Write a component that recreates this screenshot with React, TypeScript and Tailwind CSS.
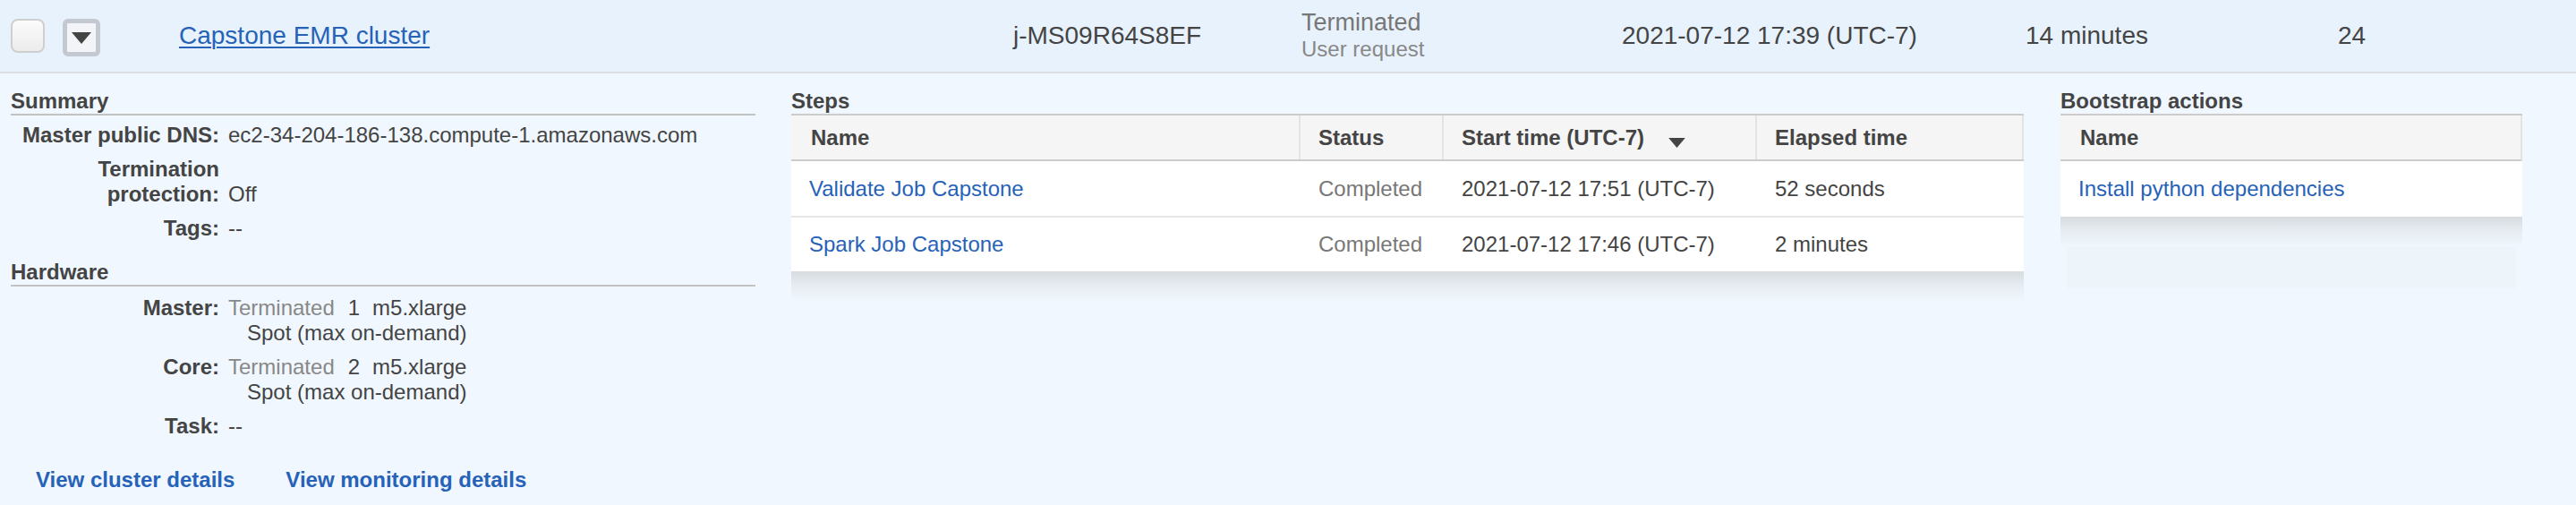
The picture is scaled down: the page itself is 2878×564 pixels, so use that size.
import React from 'react';

const blue = 'text-[#2662b8]';

function Caret({ className }: { className?: string }) {
  return (
    <svg viewBox="0 0 22 13" className={className}>
      <path d="M0 0H22L11 13Z" fill="#444" />
    </svg>
  );
}

function Label({ children }: { children: React.ReactNode }) {
  return <div className="text-right font-bold">{children}</div>;
}

function Instance({ count }: { count: string }) {
  return (
    <div className="flex w-fit flex-col items-end">
      <div className="flex">
        <span className="text-[#888]">Terminated</span>
        <span className="ml-[15px]">{count}</span>
        <span className="ml-[14px]">m5.xlarge</span>
      </div>
      <div>Spot (max on-demand)</div>
    </div>
  );
}

function TableFade() {
  return <div className="h-[34px] bg-linear-to-b from-[#d7dce1] via-[#e7edf2] to-[#f0f7fe]" />;
}

export default function App() {
  const steps = [
    { name: 'Validate Job Capstone', start: '2021-07-12 17:51 (UTC-7)', elapsed: '52 seconds' },
    { name: 'Spark Job Capstone', start: '2021-07-12 17:46 (UTC-7)', elapsed: '2 minutes' },
  ];

  return (
    <div className="h-[564px] overflow-hidden bg-[#f0f7fe] font-['Liberation_Sans',Arial,Helvetica,sans-serif] text-[#444]">
      {/* cluster row */}
      <div className="flex h-[82px] items-center border-b-2 border-[#dcdfe3] bg-[#e8f2fc] text-[28px]">
        <div className="flex w-[200px] shrink-0 items-center pl-[12px]">
          <div className="h-[38px] w-[38px] rounded-[8px] border-2 border-[#cfcfcf] bg-linear-to-b from-[#fbfbfb] to-[#ececec]" />
          <div className="ml-[20px] mt-[4px] flex h-[42px] w-[42px] items-center justify-center rounded-[6px] border-[5px] border-[#c4c9d1] bg-[#f2f4f7]">
            <Caret className="h-[13px] w-[22px]" />
          </div>
        </div>
        <div className="w-[932px] shrink-0">
          <a className={`${blue} underline decoration-2 underline-offset-[3px]`}>Capstone EMR cluster</a>
        </div>
        <div className="w-[322px] shrink-0">j-MS09R64S8EF</div>
        <div className="flex w-[358px] shrink-0 flex-col leading-[30px]">
          <span className="text-[27px] text-[#777]">Terminated</span>
          <span className="text-[24px] text-[#888]">User request</span>
        </div>
        <div className="w-[451px] shrink-0">2021-07-12 17:39 (UTC-7)</div>
        <div className="w-[349px] shrink-0">14 minutes</div>
        <div>24</div>
      </div>

      {/* details */}
      <div className="flex pl-[12px] pt-[17px] text-[24px] leading-[28px]">
        <div className="w-[832px] shrink-0">
          <h3 className="border-b-2 border-[#c2c2c2] font-bold">Summary</h3>
          <div className="mt-[8px] grid grid-cols-[233px_auto] items-end gap-x-[10px] gap-y-[10px]">
            <Label>Master public DNS:</Label>
            <div>ec2-34-204-186-138.compute-1.amazonaws.com</div>
            <Label>Termination protection:</Label>
            <div>Off</div>
            <Label>Tags:</Label>
            <div>--</div>
          </div>

          <h3 className="mt-[21px] border-b-2 border-[#c2c2c2] font-bold">Hardware</h3>
          <div className="mt-[10px] grid grid-cols-[233px_auto] items-start gap-x-[10px] gap-y-[10px]">
            <Label>Master:</Label>
            <Instance count="1" />
            <Label>Core:</Label>
            <Instance count="2" />
            <Label>Task:</Label>
            <div>--</div>
          </div>

          <div className={`mt-[32px] flex font-bold ${blue}`}>
            <a className="ml-[28px]">View cluster details</a>
            <a className="ml-[57px]">View monitoring details</a>
          </div>
        </div>

        <div className="ml-[40px] w-[1377px] shrink-0">
          <h3 className="font-bold">Steps</h3>
          <div className="border-t-2 border-[#cccccc]">
            <div className="grid h-[51px] grid-cols-[567px_160px_350px_300px] border-b-2 border-[#cccccc] bg-[#f5f5f5] font-bold">
              <div className="flex items-center pl-[22px]">Name</div>
              <div className="flex items-center border-l-2 border-[#e3e3e3] pl-[20px]">Status</div>
              <div className="flex items-center border-l-2 border-[#e3e3e3] pl-[20px]">
                Start time (UTC-7)
                <Caret className="ml-[26px] mt-[12px] h-[11px] w-[21px]" />
              </div>
              <div className="flex items-center border-x-2 border-[#e3e3e3] pl-[20px]">Elapsed time</div>
            </div>
            {steps.map((s, i) => (
              <div
                key={s.name}
                className={`grid grid-cols-[567px_160px_350px_300px] bg-white ${i === 0 ? 'h-[63px] border-b-2 border-[#e6e6e6]' : 'h-[60px]'}`}
              >
                <div className={`flex items-center pl-[20px] ${blue}`}>{s.name}</div>
                <div className="flex items-center pl-[22px] text-[#777]">Completed</div>
                <div className="flex items-center pl-[22px]">{s.start}</div>
                <div className="flex items-center pl-[22px]">{s.elapsed}</div>
              </div>
            ))}
            <TableFade />
          </div>
        </div>

        <div className="ml-[41px] w-[516px] shrink-0">
          <h3 className="font-bold">Bootstrap actions</h3>
          <div className="border-t-2 border-[#cccccc]">
            <div className="flex h-[51px] items-center border-b-2 border-r-2 border-[#cccccc] border-r-[#e3e3e3] bg-[#f5f5f5] pl-[22px] font-bold">
              Name
            </div>
            <div className={`flex h-[62px] items-center bg-white pl-[20px] ${blue}`}>Install python dependencies</div>
            <TableFade />
            <div className="mx-[7px] h-[46px] bg-[#edf5fb]" />
          </div>
        </div>
      </div>
    </div>
  );
}
